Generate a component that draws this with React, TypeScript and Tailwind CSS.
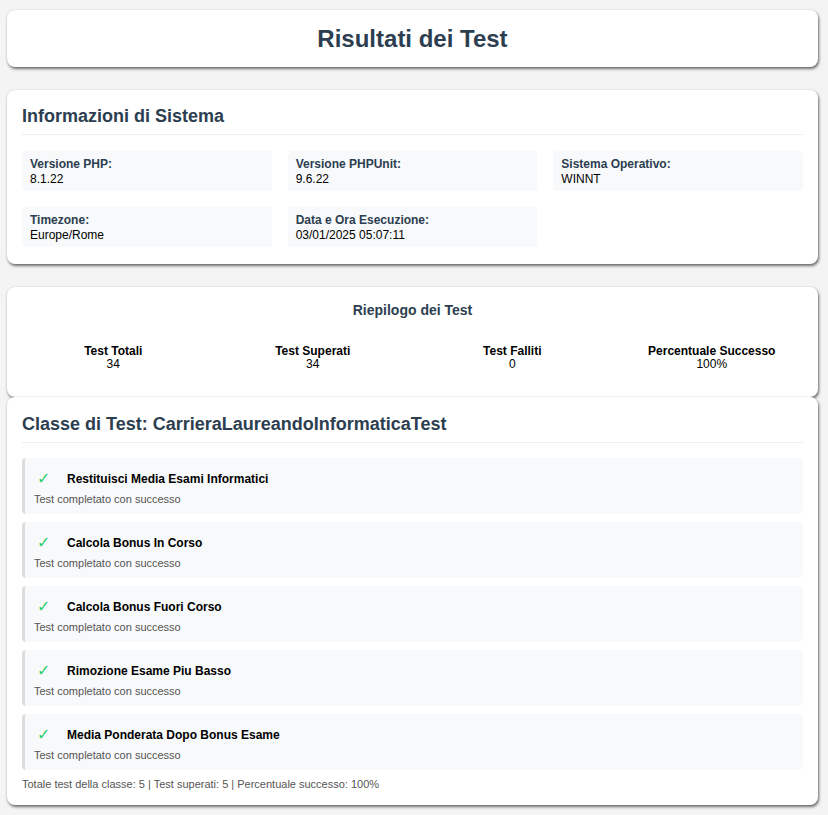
import React from "react";

const info = [
  { label: "Versione PHP:", value: "8.1.22" },
  { label: "Versione PHPUnit:", value: "9.6.22" },
  { label: "Sistema Operativo:", value: "WINNT" },
  { label: "Timezone:", value: "Europe/Rome" },
  { label: "Data e Ora Esecuzione:", value: "03/01/2025 05:07:11" },
];

const stats = [
  { label: "Test Totali", value: "34" },
  { label: "Test Superati", value: "34" },
  { label: "Test Falliti", value: "0" },
  { label: "Percentuale Successo", value: "100%" },
];

const tests = [
  "Restituisci Media Esami Informatici",
  "Calcola Bonus In Corso",
  "Calcola Bonus Fuori Corso",
  "Rimozione Esame Piu Basso",
  "Media Ponderata Dopo Bonus Esame",
];

const card =
  "bg-white rounded-[8px] shadow-[1px_2px_3px_rgba(0,0,0,0.55),0_0_2px_rgba(0,0,0,0.12)]";

export default function App() {
  return (
    <div
      className="min-h-[815px] bg-[#f4f4f4] pl-[7px] pr-[10px] pt-[10px] pb-[10px]"
      style={{ fontFamily: '"Liberation Sans", Arial, sans-serif' }}
    >
      <div className={`${card} h-[57px] flex items-center justify-center`}>
        <h1 className="text-[24px] leading-[28px] font-bold text-[#2c3e50]">Risultati dei Test</h1>
      </div>

      <div className={`${card} mt-[23px] px-[15px] pt-[15px] pb-[17px]`}>
        <h2 className="text-[18px] leading-[22px] font-bold text-[#2c3e50] pb-[7px] border-b border-[#eeeeee]">
          Informazioni di Sistema
        </h2>
        <div className="grid grid-cols-3 gap-[16px] mt-[16px]">
          {info.map((i) => (
            <div key={i.label} className="bg-[#f8f9fa] rounded-[4px] px-[8px] pt-[6px] pb-[4px] text-[12px] leading-[15px]">
              <div className="font-bold text-[#2c3e50]">{i.label}</div>
              <div className="text-black">{i.value}</div>
            </div>
          ))}
        </div>
      </div>

      <div className={`${card} mt-[23px] h-[110px] px-[15px] pt-[15px]`}>
        <h3 className="text-[14px] leading-[16px] font-bold text-[#2c3e50] text-center">Riepilogo dei Test</h3>
        <div className="grid grid-cols-4 gap-[17px] mt-[27px]">
          {stats.map((s) => (
            <div key={s.label} className="text-center text-[12px] leading-[13px] text-black">
              <div className="font-bold">{s.label}</div>
              <div>{s.value}</div>
            </div>
          ))}
        </div>
      </div>

      <div className={`${card} h-[408px] px-[15px] pt-[16px]`}>
        <h2 className="text-[18px] leading-[22px] font-bold text-[#2c3e50] pb-[7px] border-b border-[#eeeeee]">
          Classe di Test: CarrieraLaureandoInformaticaTest
        </h2>
        <div className="flex flex-col gap-[8px] mt-[15px]">
          {tests.map((t) => (
            <div
              key={t}
              className="bg-[#f8f9fa] rounded-[4px] border-l-[3px] border-[#dddddd] h-[56px] pl-[9px] pt-[11px]"
            >
              <div className="flex items-center h-[20px]">
                <span
                  className="w-[33px] pl-[3px] text-[16px] leading-[20px] text-[#2ecc71]"
                  style={{ fontFamily: '"DejaVu Sans", sans-serif' }}
                >
                  ✓
                </span>
                <span className="text-[12px] font-bold text-black">{t}</span>
              </div>
              <div className="mt-[4px] text-[11px] leading-[13px] text-[#555555]">Test completato con successo</div>
            </div>
          ))}
        </div>
        <div className="mt-[8px] text-[11px] leading-[13px] text-[#555555]">
          <span className="text-[#555555]">Totale test della classe: 5 | Test superati: 5 | Percentuale successo: 100%</span>
        </div>
      </div>
    </div>
  );
}
